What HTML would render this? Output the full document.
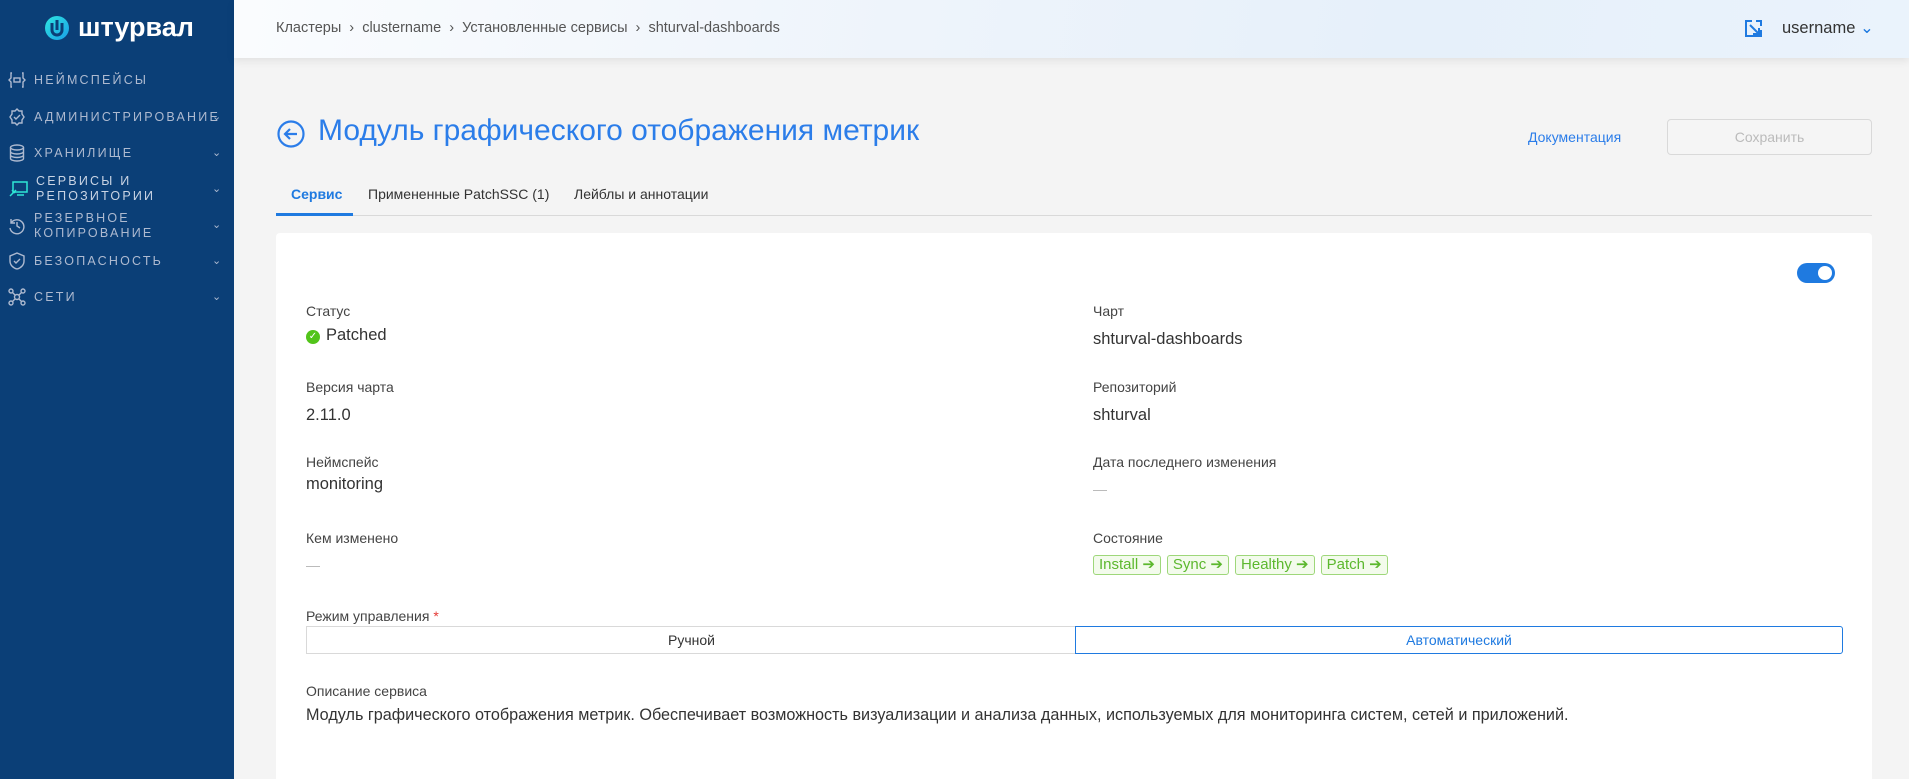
<!DOCTYPE html>
<html><head><meta charset="utf-8"><style>
*{box-sizing:border-box;margin:0;padding:0}
html{overflow:hidden;width:1909px;height:779px}
body{width:1909px;height:779px;overflow:hidden;background:#f4f4f4;font-family:"Liberation Sans",sans-serif;position:relative;color:#333}
.sb{position:absolute;left:0;top:0;width:234px;height:779px;background:#0b3f77}
.logo{position:absolute;left:44px;top:12px;display:flex;align-items:center;gap:8px;color:#fff;font-weight:bold;font-size:27px}
.nav{position:absolute;left:8px;color:#aebad0;font-size:12.5px;letter-spacing:2.2px;line-height:15px;display:flex;align-items:center}
.nav svg{margin-right:8px;flex:none}
.chev{position:absolute;left:212px;color:#aebad0;font-size:11px}
.hdr{position:absolute;left:234px;top:0;right:0;height:58px;background:linear-gradient(100deg,#fafcfe 0%,#eef4fb 40%,#e6f0fa 70%,#eaf3fc 100%);box-shadow:0 3px 8px rgba(0,0,0,.08)}
.bc{position:absolute;left:42px;top:20px;font-size:14.5px;color:#555}
.abs{position:absolute}
.lbl{position:absolute;font-size:14px;color:#444}
.val{position:absolute;font-size:16.5px;color:#333}
.tag{display:inline-block;border:1px solid #9ed77a;background:#f3fbec;color:#5cb82e;border-radius:3px;font-size:15px;padding:0 5px;height:20px;line-height:18px;margin-right:6px}
</style></head><body>
<div class="sb">
 <div class="logo"><svg width="26" height="28" viewBox="0 0 26 28"><defs><linearGradient id="g" x1="0" y1="0" x2="1" y2="1"><stop offset="0" stop-color="#2ee6e0"/><stop offset="1" stop-color="#1a9fe8"/></linearGradient></defs><circle cx="13" cy="14" r="12" fill="url(#g)"/><path d="M8 9v7a5 5 0 0 0 10 0V9" stroke="#0b3f77" stroke-width="3" fill="none"/><path d="M13 6v10" stroke="#0b3f77" stroke-width="3"/></svg>штурвал</div>
 <div class="nav" style="top:72px"><svg width="18" height="16" viewBox="0 0 18 16" fill="none" stroke="#aebad0" stroke-width="1.4"><path d="M4 1H3v5L1 8l2 2v5h1M14 1h1v5l2 2-2 2v5h-1"/><rect x="6" y="6" width="6" height="4"/></svg>НЕЙМСПЕЙСЫ</div>
 <div class="nav" style="top:108px"><svg width="18" height="18" viewBox="0 0 18 18" fill="none" stroke="#aebad0" stroke-width="1.4"><path d="M9 1l2 2h3v3l2 3-2 3v3h-3l-2 2-2-2H4v-3L2 9l2-3V3h3z"/><path d="M6 9l2 2 4-4"/></svg>АДМИНИСТРИРОВАНИЕ</div><span class="chev" style="top:110px">⌄</span>
 <div class="nav" style="top:144px"><svg width="18" height="18" viewBox="0 0 18 18" fill="none" stroke="#aebad0" stroke-width="1.4"><ellipse cx="9" cy="3.5" rx="6.5" ry="2.5"/><path d="M2.5 3.5v11c0 1.4 2.9 2.5 6.5 2.5s6.5-1.1 6.5-2.5v-11M2.5 7.5c0 1.4 2.9 2.5 6.5 2.5s6.5-1.1 6.5-2.5M2.5 11c0 1.4 2.9 2.5 6.5 2.5s6.5-1.1 6.5-2.5"/></svg>ХРАНИЛИЩЕ</div><span class="chev" style="top:146px">⌄</span>
 <div class="nav" style="top:174px;color:#c9d4e4"><svg width="20" height="18" viewBox="0 0 20 18" fill="none" stroke="#2ee6d6" stroke-width="1.5"><rect x="5" y="2" width="14" height="10"/><path d="M9 15h7M2 16l6-6M4 10l3 3"/></svg>СЕРВИСЫ И<br>РЕПОЗИТОРИИ</div><span class="chev" style="top:182px">⌄</span>
 <div class="nav" style="top:211px"><svg width="18" height="18" viewBox="0 0 18 18" fill="none" stroke="#aebad0" stroke-width="1.4"><path d="M3 6a7 7 0 1 1-1 5"/><path d="M3 2v4h4M9 5v4l3 2"/></svg>РЕЗЕРВНОЕ<br>КОПИРОВАНИЕ</div><span class="chev" style="top:218px">⌄</span>
 <div class="nav" style="top:252px"><svg width="18" height="18" viewBox="0 0 18 18" fill="none" stroke="#aebad0" stroke-width="1.4"><path d="M9 1l7 3v5c0 4-3 7-7 8-4-1-7-4-7-8V4z"/><path d="M6 9l2 2 4-4"/></svg>БЕЗОПАСНОСТЬ</div><span class="chev" style="top:254px">⌄</span>
 <div class="nav" style="top:288px"><svg width="18" height="18" viewBox="0 0 18 18" fill="none" stroke="#aebad0" stroke-width="1.4"><circle cx="3" cy="3" r="2"/><circle cx="15" cy="3" r="2"/><circle cx="3" cy="15" r="2"/><circle cx="15" cy="15" r="2"/><circle cx="9" cy="9" r="2.5"/><path d="M4.5 4.5l2.5 2.5M13.5 4.5L11 7M4.5 13.5L7 11M13.5 13.5L11 11"/></svg>СЕТИ</div><span class="chev" style="top:290px">⌄</span>
</div>
<div class="hdr">
 <div class="bc">Кластеры &nbsp;›&nbsp; clustername &nbsp;›&nbsp; Установленные сервисы &nbsp;›&nbsp; shturval-dashboards</div>
 <svg class="abs" style="left:1511px;top:20px" width="17" height="17" viewBox="0 0 17 17" fill="none" stroke="#1f7ae0" stroke-width="2"><path d="M7 1H1v15h15v-6"/><path d="M5 5l9 9M14 8v6H8"/><path d="M11 1h5v5"/></svg>
 <div class="abs" style="left:1548px;top:18px;font-size:16.5px;color:#333">username <span style="color:#1f7ae0">⌄</span></div>
</div>
<svg class="abs" style="left:277px;top:120px" width="28" height="28" viewBox="0 0 28 28" fill="none" stroke="#2b7de9" stroke-width="2.2"><circle cx="14" cy="14" r="12.5"/><path d="M20 14H8M13 9l-5 5 5 5"/></svg>
<div class="abs" style="left:318px;top:114px;font-size:30px;color:#2b7de9">Модуль графического отображения метрик</div>
<div class="abs" style="left:1528px;top:129px;font-size:14px;color:#2b7de9">Документация</div>
<div class="abs" style="left:1667px;top:119px;width:205px;height:36px;border:1px solid #d9d9d9;border-radius:4px;background:#f5f5f5;color:#bbb;font-size:14px;text-align:center;line-height:34px">Сохранить</div>
<div class="abs" style="left:276px;top:215px;width:1596px;height:1px;background:#d9d9d9"></div>
<div class="abs" style="left:276px;top:213px;width:77px;height:3px;background:#1f7ae0"></div>
<div class="abs" style="left:291px;top:186px;font-size:14px;color:#1f7ae0;font-weight:bold">Сервис</div>
<div class="abs" style="left:368px;top:186px;font-size:14px;color:#333">Примененные PatchSSC (1)</div>
<div class="abs" style="left:574px;top:186px;font-size:14px;color:#333">Лейблы и аннотации</div>
<div class="abs" style="left:276px;top:233px;width:1596px;height:546px;background:#fff;border-radius:4px 4px 0 0"></div>
<div class="abs" style="left:1797px;top:263px;width:38px;height:20px;border-radius:10px;background:#1f7ae0"><div style="position:absolute;right:3px;top:3px;width:14px;height:14px;border-radius:50%;background:#fff"></div></div>
<div class="lbl" style="left:306px;top:303px">Статус</div>
<div class="val" style="left:306px;top:326px"><span style="display:inline-block;width:14px;height:14px;border-radius:50%;background:#52c41a;color:#fff;font-size:10px;text-align:center;line-height:14px;vertical-align:1px;margin-right:6px">✓</span>Patched</div>
<div class="lbl" style="left:1093px;top:303px">Чарт</div>
<div class="val" style="left:1093px;top:330px">shturval-dashboards</div>
<div class="lbl" style="left:306px;top:379px">Версия чарта</div>
<div class="val" style="left:306px;top:406px">2.11.0</div>
<div class="lbl" style="left:1093px;top:379px">Репозиторий</div>
<div class="val" style="left:1093px;top:406px">shturval</div>
<div class="lbl" style="left:306px;top:454px">Неймспейс</div>
<div class="val" style="left:306px;top:475px">monitoring</div>
<div class="lbl" style="left:1093px;top:454px">Дата последнего изменения</div>
<div class="abs" style="left:1093px;top:490px;width:14px;height:1px;background:#bbb"></div>
<div class="lbl" style="left:306px;top:530px">Кем изменено</div>
<div class="abs" style="left:306px;top:566px;width:14px;height:1px;background:#bbb"></div>
<div class="lbl" style="left:1093px;top:530px">Состояние</div>
<div class="abs" style="left:1093px;top:555px"><span class="tag">Install ➔</span><span class="tag">Sync ➔</span><span class="tag">Healthy ➔</span><span class="tag">Patch ➔</span></div>
<div class="lbl" style="left:306px;top:608px">Режим управления <span style="color:#e53935">*</span></div>
<div class="abs" style="left:306px;top:626px;width:770px;height:28px;border:1px solid #d9d9d9;border-right:none;font-size:14px;text-align:center;line-height:26px;color:#333">Ручной</div>
<div class="abs" style="left:1075px;top:626px;width:768px;height:28px;border:1px solid #1f7ae0;border-radius:0 3px 3px 0;font-size:14px;text-align:center;line-height:26px;color:#1f7ae0">Автоматический</div>
<div class="lbl" style="left:306px;top:683px">Описание сервиса</div>
<div class="val" style="left:306px;top:706px;font-size:16.2px">Модуль графического отображения метрик. Обеспечивает возможность визуализации и анализа данных, используемых для мониторинга систем, сетей и приложений.</div>
</body></html>
